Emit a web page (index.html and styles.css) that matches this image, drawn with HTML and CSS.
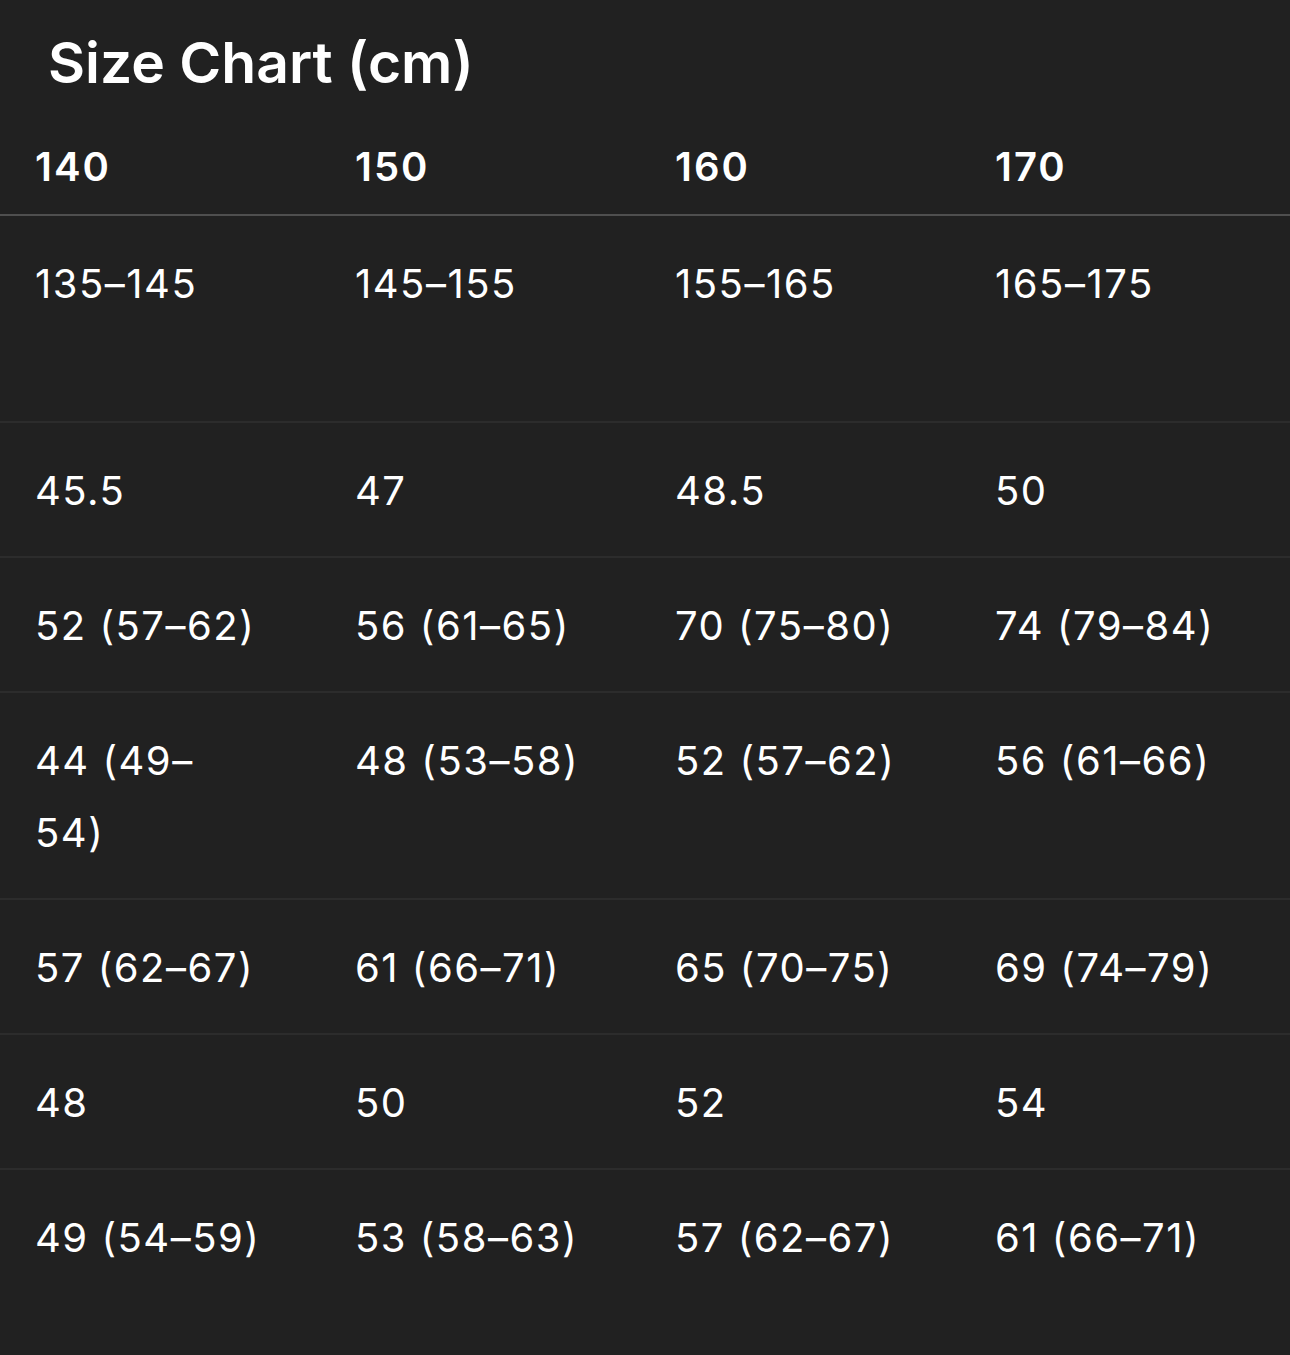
FILE: index.html
```html
<!DOCTYPE html>
<html lang="en">
<head>
<meta charset="utf-8">
<title>Size Chart</title>
<link rel="stylesheet" href="styles.css">
</head>
<body>
<h1 class="title">Size Chart (cm)</h1>
<table class="chart">
  <colgroup>
    <col class="col"><col class="col"><col class="col"><col>
  </colgroup>
  <thead>
    <tr>
      <th>140</th><th>150</th><th>160</th><th>170</th>
    </tr>
  </thead>
  <tbody>
    <tr class="tall">
      <td>135–145</td><td>145–155</td><td>155–165</td><td>165–175</td>
    </tr>
    <tr>
      <td>45.5</td><td>47</td><td>48.5</td><td>50</td>
    </tr>
    <tr>
      <td>52 (57–62)</td><td>56 (61–65)</td><td>70 (75–80)</td><td>74 (79–84)</td>
    </tr>
    <tr>
      <td>44 (49–<br>54)</td><td>48 (53–58)</td><td>52 (57–62)</td><td>56 (61–66)</td>
    </tr>
    <tr>
      <td>57 (62–67)</td><td>61 (66–71)</td><td>65 (70–75)</td><td>69 (74–79)</td>
    </tr>
    <tr>
      <td>48</td><td>50</td><td>52</td><td>54</td>
    </tr>
    <tr class="last">
      <td>49 (54–59)</td><td>53 (58–63)</td><td>57 (62–67)</td><td>61 (66–71)</td>
    </tr>
  </tbody>
</table>
</body>
</html>
```

FILE: styles.css
```css
html, body {
  margin: 0;
  padding: 0;
  background: #212121;
  color: #ffffff;
  font-family: Inter, "Noto Sans", "Liberation Sans", sans-serif;
  min-height: 1355px;
}

.title {
  margin: 0;
  padding: 28px 0 0 48px;
  font-size: 57px;
  font-weight: 600;
  line-height: 70px;
  letter-spacing: 0;
}

.chart {
  width: 100%;
  border-collapse: collapse;
  table-layout: fixed;
}

.chart .col {
  width: 320px;
}

.chart th,
.chart td {
  text-align: left;
  vertical-align: top;
  padding-left: 35px;
  font-size: 40px;
  line-height: 72px;
  letter-spacing: 1.5px;
}

.chart th {
  font-weight: 600;
  letter-spacing: 2px;
  padding-top: 33px;
  padding-bottom: 11px;
  border-bottom: 2px solid #4f4f4f;
}

.chart td {
  font-weight: 400;
  padding-top: 32px;
  padding-bottom: 29px;
  border-bottom: 2px solid #2c2c2c;
}

.chart tr.tall td {
  height: 144px;
}

.chart tr.last td {
  border-bottom: none;
}
```
